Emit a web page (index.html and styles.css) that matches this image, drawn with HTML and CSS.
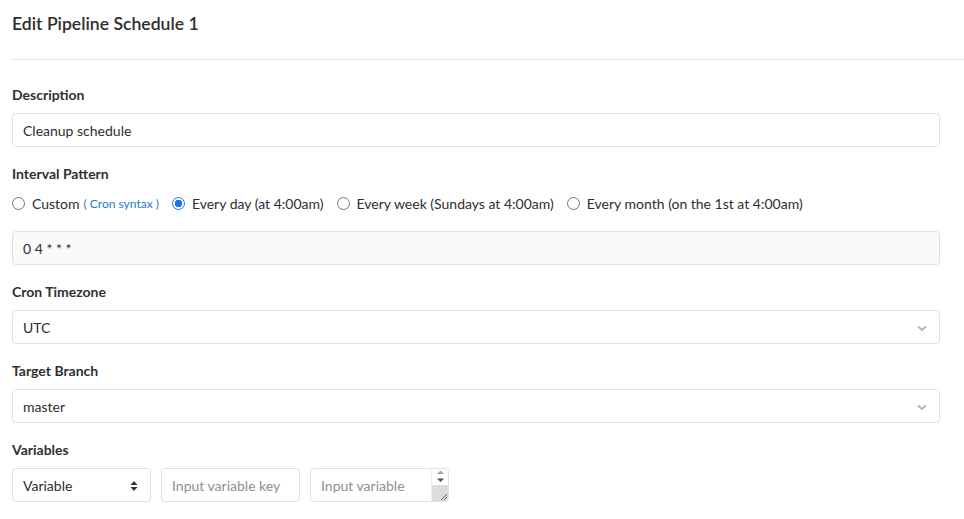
FILE: index.html
```html
<!DOCTYPE html>
<html>
<head>
<meta charset="utf-8">
<link rel="stylesheet" href="styles.css">
</head>
<body>
<div class="page">
  <h3 class="title">Edit Pipeline Schedule 1</h3>
  <hr class="divider">
  <form class="form">
    <div class="group">
      <label class="label">Description</label>
      <div class="field">Cleanup schedule</div>
    </div>
    <div class="group">
      <label class="label">Interval Pattern</label>
      <div class="radios">
        <span class="opt"><span class="radio"></span>Custom <span class="cron">( Cron syntax )</span></span>
        <span class="opt"><span class="radio checked"></span>Every day (at 4:00am)</span>
        <span class="opt"><span class="radio"></span>Every week (Sundays at 4:00am)</span>
        <span class="opt"><span class="radio"></span>Every month (on the 1st at 4:00am)</span>
      </div>
      <div class="field readonly">0 4 * * *</div>
    </div>
    <div class="group">
      <label class="label">Cron Timezone</label>
      <div class="field select">UTC<svg class="chev" width="10" height="7" viewBox="0 0 10 7"><path d="M1 1.5 L5 5 L9 1.5" fill="none" stroke="#b5b5b5" stroke-width="2"/></svg></div>
    </div>
    <div class="group">
      <label class="label">Target Branch</label>
      <div class="field select">master<svg class="chev" width="10" height="7" viewBox="0 0 10 7"><path d="M1 1.5 L5 5 L9 1.5" fill="none" stroke="#b5b5b5" stroke-width="2"/></svg></div>
    </div>
    <div class="group">
      <label class="label">Variables</label>
      <div class="varrow">
        <div class="field small">Variable<svg class="updown" width="8" height="12" viewBox="0 0 8 12"><path d="M4 1 L7.5 5 L0.5 5 Z M4 11 L7.5 7 L0.5 7 Z" fill="#333"/></svg></div>
        <div class="field small ph">Input variable key</div>
        <div class="field small ph area">
          <span class="areatext">Input variable</span>
          <span class="sbar">
            <span class="sbtop"><svg width="9" height="16" viewBox="0 0 9 16"><path d="M4.5 1.5 L8 5 L1 5 Z" fill="#a3a3a3"/><path d="M4.5 13 L8 9.5 L1 9.5 Z" fill="#505050"/></svg></span>
            <span class="sbtrack"><svg width="10" height="10" viewBox="0 0 10 10"><path d="M9 3 L3 9 M9 6 L6 9" stroke="#666" stroke-width="1"/></svg></span>
          </span>
        </div>
      </div>
    </div>
  </form>
</div>
</body>
</html>
```
FILE: styles.css
```css
* { box-sizing: border-box; }
body {
  margin: 0;
  font-family: "Lato", "Noto Sans", sans-serif;
  font-size: 14px;
  color: #2e2e2e;
  background: #fff;
}
.page {
  padding: 0 0 0 12px;
}
.title {
  margin: 0;
  padding-top: 12px;
  font-size: 17.6px;
  font-weight: 600;
  line-height: 24px;
  color: #2e2e2e;
}
.divider {
  border: 0;
  border-top: 1px solid #e5e5e5;
  margin: 23px 0 0 0;
}
.form {
  padding-top: 25px;
  width: 928px;
}
.group {
  display: flex;
  flex-direction: column;
  margin-bottom: 17px;
}
.label {
  font-weight: 700;
  line-height: 20px;
  margin-bottom: 8px;
  color: #303030;
}
.field {
  height: 34px;
  border: 1px solid #e0e0e0;
  border-radius: 4px;
  padding: 0 10px;
  display: flex;
  align-items: center;
  background: #fff;
  position: relative;
}
.readonly {
  background: #fafafa;
}
.select .chev {
  position: absolute;
  right: 12px;
  top: 14px;
}
.radios {
  display: flex;
  align-items: center;
  height: 22px;
  margin-bottom: 17px;
  gap: 13px;
}
.opt {
  display: flex;
  align-items: center;
}
.radio {
  width: 13px;
  height: 13px;
  border: 1px solid #767676;
  border-radius: 50%;
  margin-right: 7px;
  background: #fff;
}
.radio.checked {
  border: 1px solid #1a73e8;
  background: radial-gradient(circle, #1a73e8 0 3.5px, #fff 4px);
}
.cron {
  color: #1f78d1;
  font-size: 12px;
  margin-left: 4px;
}
.varrow {
  display: flex;
  gap: 10px;
}
.small {
  width: 139px;
}
.updown {
  position: absolute;
  right: 12px;
  top: 11px;
}
.ph {
  color: #8f8f8f;
}
.area {
  padding-right: 0;
  width: 139px;
  overflow: hidden;
}
.areatext {
  flex: 1;
}
.sbar {
  width: 17px;
  height: 100%;
  display: flex;
  flex-direction: column;
  border-left: 1px solid #f0f0f0;
}
.sbtop {
  height: 16px;
  display: flex;
  justify-content: center;
  background: #fff;
}
.sbtrack {
  flex: 1;
  background: #dcdcdc;
  display: flex;
  align-items: flex-end;
  justify-content: flex-end;
}
```
